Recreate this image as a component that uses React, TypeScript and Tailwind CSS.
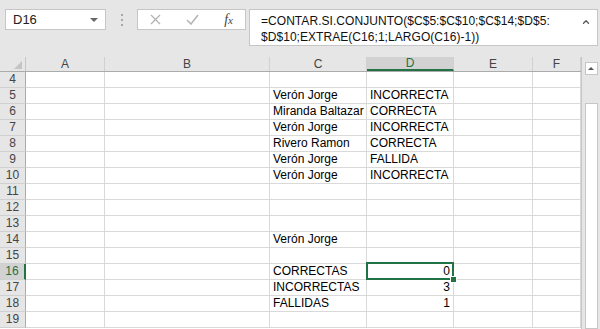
import { ChevronUp } from 'lucide-react';

const cols = [
  { key: 'A', w: 'w-[79px]' },
  { key: 'B', w: 'w-[165px]' },
  { key: 'C', w: 'w-[97px]' },
  { key: 'D', w: 'w-[87px]' },
  { key: 'E', w: 'w-[79px]' },
  { key: 'F', w: 'w-[48px]' },
];

type Row = { n: number; c?: string; d?: string; num?: boolean };

const rows: Row[] = [
  { n: 4 },
  { n: 5, c: 'Verón Jorge', d: 'INCORRECTA' },
  { n: 6, c: 'Miranda Baltazar', d: 'CORRECTA' },
  { n: 7, c: 'Verón Jorge', d: 'INCORRECTA' },
  { n: 8, c: 'Rivero Ramon', d: 'CORRECTA' },
  { n: 9, c: 'Verón Jorge', d: 'FALLIDA' },
  { n: 10, c: 'Verón Jorge', d: 'INCORRECTA' },
  { n: 11 },
  { n: 12 },
  { n: 13 },
  { n: 14, c: 'Verón Jorge' },
  { n: 15 },
  { n: 16, c: 'CORRECTAS', d: '0', num: true },
  { n: 17, c: 'INCORRECTAS', d: '3', num: true },
  { n: 18, c: 'FALLIDAS', d: '1', num: true },
  { n: 19 },
];

const FormulaBar = () => (
  <div className="h-[57px] bg-[#e6e6e6] flex items-start pt-[9px] pl-[5px] pr-[2px]">
    {/* name box */}
    <div className="w-[101px] h-[21px] bg-white border border-[#c6c6c6] flex items-center justify-between pl-[7px] pr-[7px] text-[13px] text-[#222]">
      <span>D16</span>
      <span className="w-0 h-0 border-l-[4px] border-r-[4px] border-t-[4px] border-l-transparent border-r-transparent border-t-[#666]" />
    </div>
    <div className="w-[31px] h-[21px] flex flex-col items-center justify-center gap-[3px]">
      <span className="w-[2px] h-[2px] bg-[#a6a6a6]" />
      <span className="w-[2px] h-[2px] bg-[#a6a6a6]" />
      <span className="w-[2px] h-[2px] bg-[#a6a6a6]" />
    </div>
    {/* cancel / enter / fx */}
    <div className="w-[109px] h-[21px] bg-white border border-[#c6c6c6] flex items-center justify-between pl-[12px] pr-[12px]">
      <svg width="11" height="11" viewBox="0 0 11 11" stroke="#b3b3b3" strokeWidth="1.3" fill="none">
        <path d="M1 1 L10 10 M10 1 L1 10" />
      </svg>
      <svg width="13" height="11" viewBox="0 0 13 11" stroke="#b3b3b3" strokeWidth="1.5" fill="none">
        <path d="M1 6 L5 10 L12 1" />
      </svg>
      <span className="font-['Liberation_Serif'] italic text-[14px] text-[#444] leading-none">
        f<span className="text-[11px]">x</span>
      </span>
    </div>
    {/* formula */}
    <div className="ml-[3px] flex-1 h-[37px] bg-white border border-[#c6c6c6] flex justify-between pl-[11px] pr-[6px] pt-[3px]">
      <div className="text-[12px] leading-[16px] text-[#111] tracking-[0.05px]">
        =CONTAR.SI.CONJUNTO($C$5:$C$10;$C$14;$D$5:
        <br />
        $D$10;EXTRAE(C16;1;LARGO(C16)-1))
      </div>
      <ChevronUp className="w-[10px] h-[10px] mt-[4px] text-[#555]" strokeWidth={3} />
    </div>
  </div>
);

const App = () => {
  return (
    <div className="w-[600px] h-[329px] overflow-hidden bg-white font-['Liberation_Sans',Arial,sans-serif]">
      <FormulaBar />
      <div className="flex">
        <div className="flex flex-col">
          {/* column headers */}
          <div className="flex h-[15px] bg-[#e6e6e6] border-b border-[#ababab] text-[12px] text-[#444]">
            <div className="w-[26px] h-full flex items-end justify-end pr-[3px] pb-[2px] border-r border-[#c6c6c6]">
              <svg width="8" height="8" viewBox="0 0 8 8">
                <path d="M8 0 L8 8 L0 8 Z" fill="#c4c4c4" />
              </svg>
            </div>
            {cols.map((c) => (
              <div
                key={c.key}
                className={`${c.w} h-full flex items-center justify-center border-r border-[#d0d0d0] ${
                  c.key === 'D' ? 'bg-[#d2d2d2] text-[#217346] border-b-2 border-b-[#217346]' : ''
                }`}
              >
                {c.key}
              </div>
            ))}
          </div>
          {/* rows */}
          {rows.map((r) => (
            <div key={r.n} className="flex h-[16px] text-[12px] leading-[15px]">
              <div
                className={`w-[26px] h-full flex items-center justify-center border-b border-[#d0d0d0] ${
                  r.n === 16
                    ? 'bg-[#d2d2d2] text-[#217346] border-r-2 border-r-[#217346]'
                    : 'bg-[#e6e6e6] text-[#444] border-r border-r-[#ababab]'
                }`}
              >
                {r.n}
              </div>
              {cols.map((c) => {
                const sel = r.n === 16 && c.key === 'D';
                let text: string | undefined;
                if (c.key === 'C') text = r.c;
                if (c.key === 'D') text = r.d;
                return (
                  <div
                    key={c.key}
                    className={`${c.w} h-full relative border-r border-b border-[#d9d9d9] px-[3px] whitespace-nowrap text-black ${
                      c.key === 'D' && r.num ? 'text-right' : ''
                    } ${sel ? 'z-10' : ''}`}
                  >
                    {text}
                    {sel && (
                      <>
                        <span className="absolute -left-[1px] -top-[2px] -right-[1px] -bottom-[1px] border-2 border-[#217346]" />
                        <span className="absolute -right-[4px] -bottom-[4px] w-[7px] h-[7px] bg-[#217346] border border-white" />
                      </>
                    )}
                  </div>
                );
              })}
            </div>
          ))}
        </div>
        {/* vertical scrollbar */}
        <div className="flex-1 h-[272px] bg-[#e6e6e6] border-l border-[#c6c6c6] flex flex-col items-center pt-[5px]">
          <div className="w-[13px] h-[13px] bg-white border border-[#c6c6c6] flex items-center justify-center">
            <span className="w-0 h-0 border-l-[3px] border-r-[3px] border-b-[3px] border-l-transparent border-r-transparent border-b-[#555]" />
          </div>
          <div className="w-[13px] flex-1 mt-[28px] bg-white border border-[#c6c6c6]" />
        </div>
      </div>
    </div>
  );
};

export default App;
